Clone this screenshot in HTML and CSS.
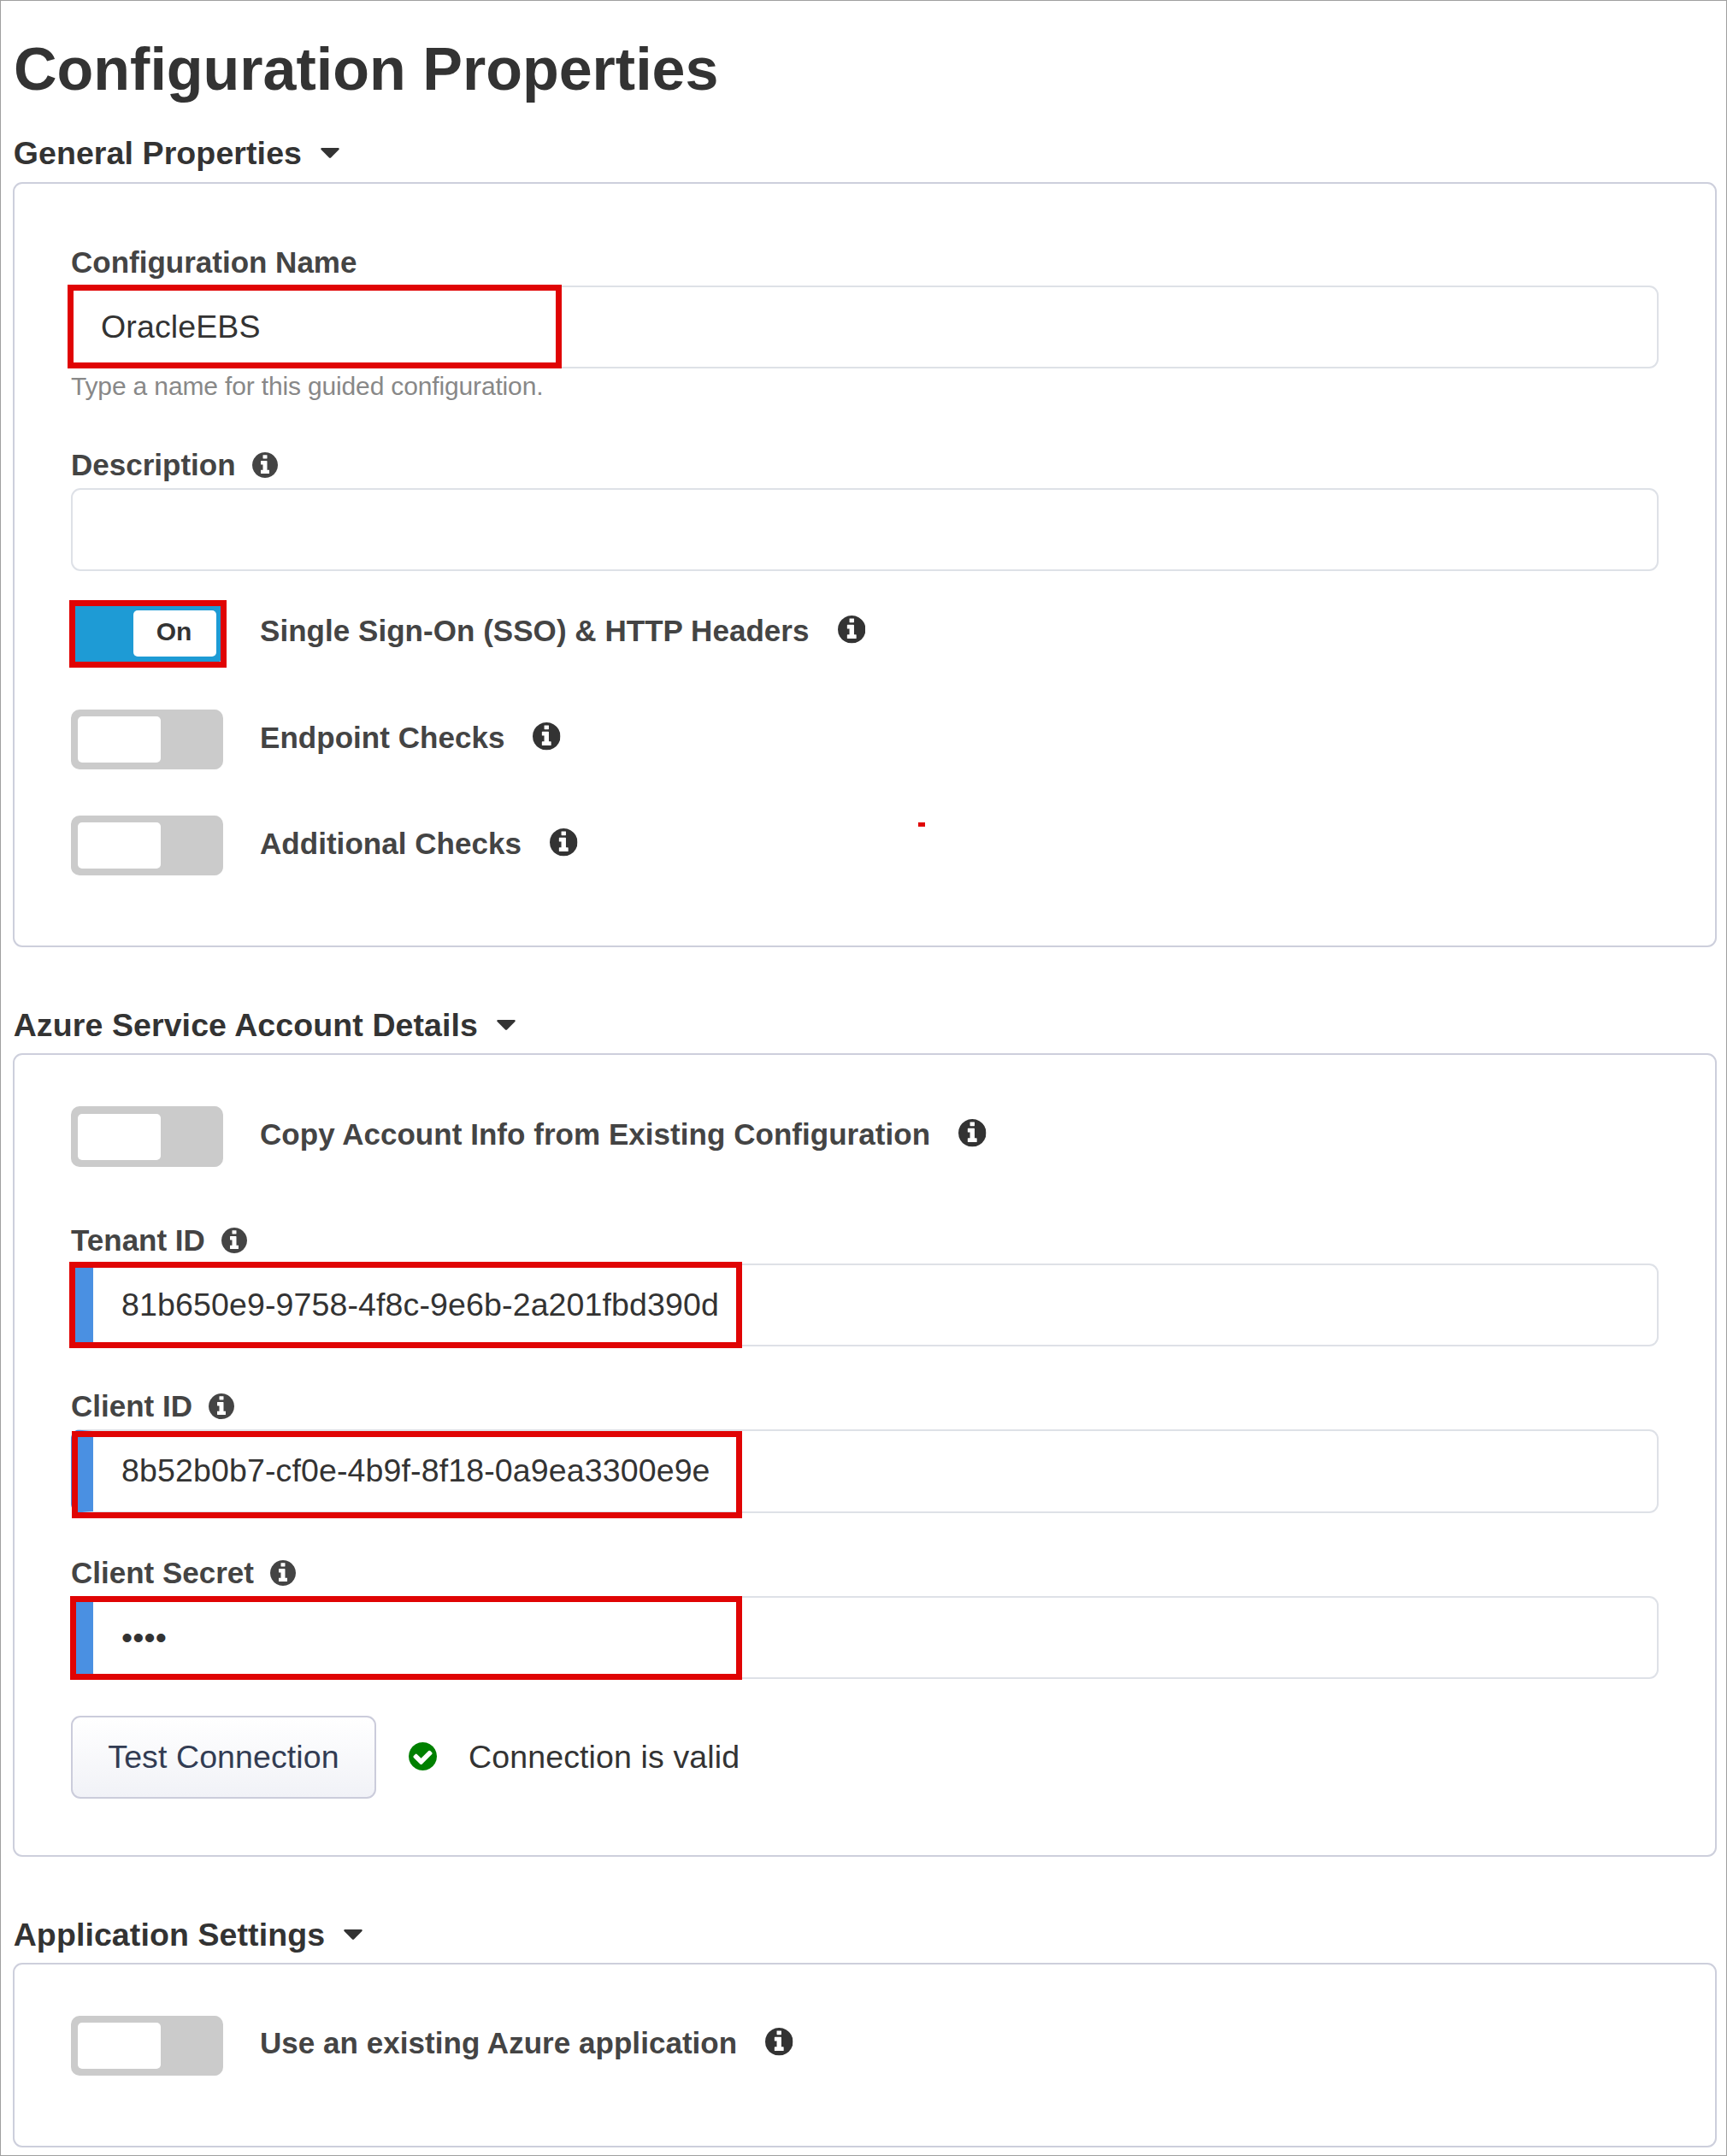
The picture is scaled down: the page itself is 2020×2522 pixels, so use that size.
FILE: index.html
```html
<!DOCTYPE html>
<html lang="en">
<head>
<meta charset="utf-8">
<title>Configuration Properties</title>
<link rel="stylesheet" href="styles.css">
</head>
<body>
<svg class="sprite" aria-hidden="true">
  <symbol id="info" viewBox="128 128 1536 1536"><path d="M1152 1376v-160q0-14-9-23t-23-9h-96v-512q0-14-9-23t-23-9h-320q-14 0-23 9t-9 23v160q0 14 9 23t23 9h96v320h-96q-14 0-23 9t-9 23v160q0 14 9 23t23 9h448q14 0 23-9t9-23zm-128-896v-160q0-14-9-23t-23-9h-192q-14 0-23 9t-9 23v160q0 14 9 23t23 9h192q14 0 23-9t9-23zm640 416q0 209-103 385.5t-279.5 279.5-385.5 103-385.5-103-279.5-279.5-103-385.5 103-385.5 279.5-279.5 385.5-103 385.5 103 279.5 279.5 103 385.5z"/></symbol>
  <symbol id="check" viewBox="128 128 1536 1536"><path d="M1412 734q0-28-18-46l-91-90q-19-19-45-19t-45 19l-408 407-226-226q-19-19-45-19t-45 19l-91 90q-18 18-18 46 0 27 18 45l362 362q19 19 45 19 27 0 46-19l543-543q18-18 18-45zm252 162q0 209-103 385.5t-279.5 279.5-385.5 103-385.5-103-279.5-279.5-103-385.5 103-385.5 279.5-279.5 385.5-103 385.5 103 279.5 279.5 103 385.5z"/></symbol>
  <symbol id="caret" viewBox="0 0 22 12"><path d="M1.2 0h19.6q1.6.7.6 2L12 11.500q-1 .8-2 0L.6 2Q-.4.700 1.200 0z"/></symbol>
</svg>
<main class="page">
  <h1 class="title">Configuration Properties</h1>

  <section class="section general">
    <h2 class="heading">General Properties <svg class="caret"><use href="#caret"/></svg></h2>
    <div class="panel">
      <div class="field">
        <div class="label">Configuration Name</div>
        <div class="input">OracleEBS<span class="mark mark-name"></span></div>
        <div class="help">Type a name for this guided configuration.</div>
      </div>
      <div class="field">
        <div class="label">Description <svg class="icon"><use href="#info"/></svg></div>
        <div class="input"></div>
      </div>
      <div class="switches">
        <div class="row raised">
          <div class="toggle on"><span class="knob">On</span><span class="mark mark-toggle"></span></div>
          <div class="text">Single Sign-On (SSO) &amp; HTTP Headers</div>
          <svg class="icon large"><use href="#info"/></svg>
        </div>
        <div class="row">
          <div class="toggle"><span class="knob"></span></div>
          <div class="text">Endpoint Checks</div>
          <svg class="icon large"><use href="#info"/></svg>
        </div>
        <div class="row">
          <div class="toggle"><span class="knob"></span></div>
          <div class="text">Additional Checks</div>
          <svg class="icon large"><use href="#info"/></svg>
        </div>
      </div>
      <span class="speck"></span>
    </div>
  </section>

  <section class="section account">
    <h2 class="heading">Azure Service Account Details <svg class="caret"><use href="#caret"/></svg></h2>
    <div class="panel">
      <div class="row">
        <div class="toggle"><span class="knob"></span></div>
        <div class="text">Copy Account Info from Existing Configuration</div>
        <svg class="icon large"><use href="#info"/></svg>
      </div>
      <div class="field tenant">
        <div class="label">Tenant ID <svg class="icon"><use href="#info"/></svg></div>
        <div class="input required">81b650e9-9758-4f8c-9e6b-2a201fbd390d<span class="mark mark-tenant"></span></div>
      </div>
      <div class="field client">
        <div class="label">Client ID <svg class="icon"><use href="#info"/></svg></div>
        <div class="input required">8b52b0b7-cf0e-4b9f-8f18-0a9ea3300e9e<span class="mark mark-client"></span></div>
      </div>
      <div class="field secret">
        <div class="label">Client Secret <svg class="icon"><use href="#info"/></svg></div>
        <div class="input required">••••<span class="mark mark-secret"></span></div>
      </div>
      <div class="actions">
        <button class="button" type="button">Test Connection</button>
        <svg class="icon valid"><use href="#check"/></svg>
        <span class="status">Connection is valid</span>
      </div>
    </div>
  </section>

  <section class="section application">
    <h2 class="heading">Application Settings <svg class="caret"><use href="#caret"/></svg></h2>
    <div class="panel">
      <div class="row raised">
        <div class="toggle"><span class="knob"></span></div>
        <div class="text">Use an existing Azure application</div>
        <svg class="icon large"><use href="#info"/></svg>
      </div>
    </div>
  </section>
</main>
</body>
</html>
```
FILE: styles.css
```css
* { box-sizing: border-box; }
body {
  margin: 0;
  background: #fff;
  color: #333;
  font: 37.5px/44px Arial, "Liberation Sans", sans-serif;
  letter-spacing: .13px;
}
.sprite { display: none; }
.page {
  height: 2522px;
  padding: 40px 11px 0 14px;
  border: 1px solid #a0a0a0;
}
.title { margin: 0 0 36px; padding-left: 1px; font-size: 70px; line-height: 80px; letter-spacing: 0; }
.section { margin-bottom: 69px; }
.heading {
  display: flex;
  align-items: flex-start;
  gap: 22px;
  margin: 0 0 11px;
  padding-left: .7px;
  font-size: 37.5px;
  line-height: 44px;
  letter-spacing: .1px;
}
.general .heading { margin-bottom: 12px; }
.caret { width: 22px; height: 12px; margin-top: 16px; fill: #333; }
.panel {
  position: relative;
  padding: 60px 66px 0;
  border: 2px solid #cdcfdc;
  border-radius: 11px;
}
.general .panel { height: 895px; padding-top: 72px; }
.account .panel { height: 940px; }
.application .panel { height: 216px; }

.label {
  display: flex;
  align-items: flex-start;
  gap: 19.5px;
  height: 47px;
  color: #444;
  font-size: 35px;
  font-weight: bold;
  line-height: 40px;
  letter-spacing: 0;
}
.icon { flex: none; width: 30px; height: 30px; margin-top: 4.5px; fill: #444; }
.icon.large { width: 32.5px; height: 32.5px; margin: 15px 0 0 33px; fill: #333; }
.icon.valid { width: 33px; height: 33px; margin: -2px 37px 0 38px; fill: #008000; }
.input {
  position: relative;
  height: 97px;
  padding: 24px 33px 0;
  border: 2px solid #dee1e7;
  border-radius: 11px;
}
.input.required { padding-left: 33px; border-left: 26px solid #4a90e2; }
.help { height: 93px; padding-top: 4px; color: #888; font-size: 30px; line-height: 34px; letter-spacing: -.15px; }

.switches { display: grid; gap: 54px; margin-top: 38px; }
.row { display: flex; align-items: flex-start; height: 70px; }
.toggle {
  position: relative;
  flex: none;
  display: flex;
  width: 178px;
  height: 70px;
  margin-right: 43px;
  padding: 8px;
  border-radius: 10px;
  background: #cbcbcb;
}
.account .toggle { height: 71px; padding-top: 9px; }
.toggle.on { justify-content: flex-end; background: #1e9bd5; }
.knob {
  width: 97px;
  padding-right: 2px;
  border-radius: 5px;
  background: #fff;
  font-size: 30px;
  font-weight: bold;
  line-height: 50px;
  letter-spacing: 0;
  text-align: center;
}
.text { padding-top: 13px; color: #444; font-size: 35px; font-weight: bold; line-height: 40px; letter-spacing: .04px; }
.raised .text { padding-top: 12px; }
.raised .icon.large { margin-top: 14px; }

.tenant { margin-top: 67px; }
.client { margin-top: 50px; }
.client .input { height: 98px; }
.secret { margin-top: 50px; }
.actions { display: flex; align-items: center; height: 97px; margin-top: 43px; }
.button {
  width: 357px;
  height: 97px;
  padding: 0 0 2px;
  border: 2px solid #cbccdb;
  border-radius: 11px;
  background: linear-gradient(#fff, #f1f2f7);
  color: #323c53;
  font: inherit;
  letter-spacing: .1px;
}
.status { padding-bottom: 2px; }

/* Red annotation frames laid over the controls */
.mark { position: absolute; border: 7px solid #e00404; }
.mark-name { left: -6px; top: -3px; width: 578px; height: 98px; }
.mark-toggle { left: -2px; top: -4px; width: 184px; height: 79px; }
.mark-tenant { left: -28px; top: -4px; width: 787px; height: 101px; }
.mark-client { left: -25px; top: 0; width: 784px; height: 102px; }
.mark-secret { left: -27px; top: -2px; width: 786px; height: 98px; }
.speck { position: absolute; left: 1057px; top: 747px; width: 8px; height: 5px; background: #e00404; }
```
